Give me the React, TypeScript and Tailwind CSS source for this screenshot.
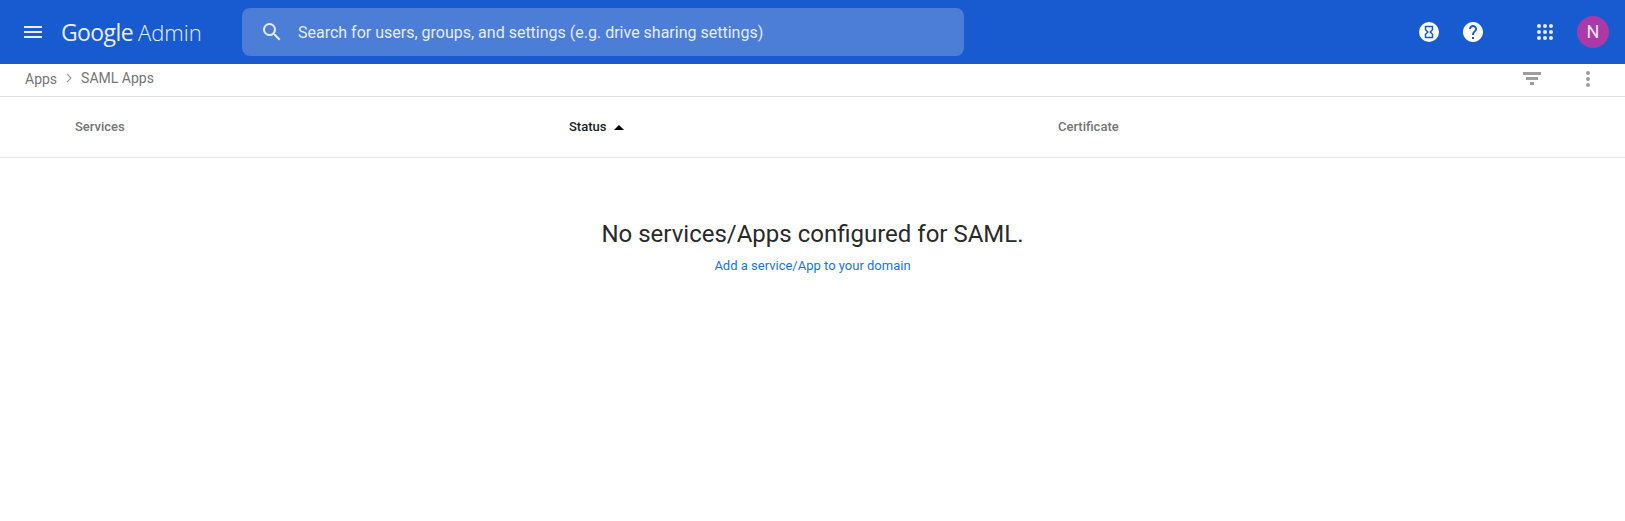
const roboto = "font-['Roboto',sans-serif]";

const MenuIcon = () => (
  <svg width="18" height="12" viewBox="0 0 18 12" fill="#e8effb">
    <rect y="0" width="18" height="2" />
    <rect y="5" width="18" height="2" />
    <rect y="10" width="18" height="2" />
  </svg>
);

const SearchIcon = () => (
  <svg width="24" height="24" viewBox="0 0 24 24" fill="#e4ecfa">
    <path d="M15.5 14h-.79l-.28-.27A6.47 6.47 0 0 0 16 9.5 6.5 6.5 0 1 0 9.5 16c1.61 0 3.09-.59 4.23-1.57l.27.28v.79l5 4.99L20.49 19l-4.99-5zm-6 0C7.01 14 5 11.99 5 9.5S7.01 5 9.5 5 14 7.01 14 9.5 11.99 14 9.5 14z" />
  </svg>
);

const HourglassIcon = () => (
  <svg width="20" height="20" viewBox="0 0 20 20">
    <circle cx="10" cy="10" r="10" fill="#ffffff" />
    <path d="M6.500 4.500h7v3.200L11.200 10l2.300 2.300v3.200h-7v-3.200L8.800 10 6.500 7.700z" fill="none" stroke="#185acf" strokeWidth="1.500" />
  </svg>
);

const HelpIcon = () => (
  <svg width="24" height="24" viewBox="0 0 24 24" fill="#ffffff">
    <path d="M12 2C6.480 2 2 6.480 2 12s4.480 10 10 10 10-4.480 10-10S17.520 2 12 2zm1 17h-2v-2h2v2zm2.070-7.750-.9.920C13.450 12.900 13 13.500 13 15h-2v-.5c0-1.100.45-2.100 1.170-2.830l1.240-1.260c.37-.36.59-.86.590-1.410 0-1.100-.9-2-2-2s-2 .9-2 2H8c0-2.210 1.790-4 4-4s4 1.790 4 4c0 .88-.36 1.680-.93 2.250z" />
  </svg>
);

const AppsIcon = () => (
  <svg width="16" height="16" viewBox="0 0 16 16" fill="#e4ecfa">
    {[2, 8, 14].map((cy) =>
      [2, 8, 14].map((cx) => <circle key={`${cx}-${cy}`} cx={cx} cy={cy} r="2" />)
    )}
  </svg>
);

const FilterIcon = () => (
  <svg width="18" height="14" viewBox="0 0 18 14" fill="#9e9e9e">
    <rect x="0" y="0" width="18" height="3" />
    <rect x="3" y="5" width="12" height="3" />
    <rect x="7" y="10" width="4" height="3" />
  </svg>
);

const KebabIcon = () => (
  <svg width="4" height="16" viewBox="0 0 4 16" fill="#9e9e9e">
    <circle cx="2" cy="2" r="2" />
    <circle cx="2" cy="8" r="2" />
    <circle cx="2" cy="14" r="2" />
  </svg>
);

const App = () => {
  return (
    <div className={`w-[1625px] h-[521px] bg-white overflow-hidden ${roboto}`}>
      <header className="h-16 bg-[#185acf] flex items-center">
        <div className="ml-6 w-[37px] flex">
          <MenuIcon />
        </div>
        <div className="w-[181px] flex items-baseline font-['Open_Sans',sans-serif] text-[#e8effb] text-[23px] leading-none">
          <span className="tracking-[-0.6px]">Google</span>
          <span className="ml-[5px] font-light text-[22px]">Admin</span>
        </div>
        <div className="w-[722px] h-12 bg-[#4c7ed8] rounded-lg flex items-center pl-[18px]">
          <SearchIcon />
          <span className="ml-[14px] pt-[2px] text-[#e4ecfa] text-base">
            Search for users, groups, and settings (e.g. drive sharing settings)
          </span>
        </div>
        <div className="ml-auto flex items-center">
          <HourglassIcon />
          <div className="ml-[22px]">
            <HelpIcon />
          </div>
          <div className="ml-[52px]">
            <AppsIcon />
          </div>
          <div className="ml-[24px] mr-4 w-8 h-8 rounded-full bg-[#ab3aa8] text-[#f3e4f3] text-lg flex items-center justify-center">
            N
          </div>
        </div>
      </header>

      <div className="h-[33px] border-b border-[#dedede] flex items-start pt-[3px]">
        <div className="ml-[25px] flex items-center text-sm text-[#757575]">
          <span className="pt-[2px]">Apps</span>
          <svg className="mx-[8px]" width="8" height="10" viewBox="0 0 8 10" fill="none" stroke="#9a9a9a" strokeWidth="1.1">
            <path d="M2 1l4 4-4 4" />
          </svg>
          <span>SAML Apps</span>
        </div>
        <div className="ml-auto flex items-center mt-[4px]">
          <FilterIcon />
          <div className="ml-[45px] mr-[35px] flex">
            <KebabIcon />
          </div>
        </div>
      </div>

      <div className="h-[61px] border-b border-[#e4e4e4] flex items-center text-[13px] font-medium">
        <div className="w-[569px] pl-[75px] text-[#757575]">Services</div>
        <div className="w-[489px] flex items-center text-[#212121]">
          <span>Status</span>
          <span className="ml-2 w-0 h-0 border-x-[5px] border-x-transparent border-b-[5px] border-b-black" />
        </div>
        <div className="text-[#757575]">Certificate</div>
      </div>

      <div className="flex flex-col items-center pt-[61px]">
        <div className="text-2xl leading-[30px] text-[#2a2a2a]">No services/Apps configured for SAML.</div>
        <a className="mt-[9px] text-[13px] leading-4 text-[#1a73e8]" href="#">
          Add a service/App to your domain
        </a>
      </div>
    </div>
  );
};

export default App;
